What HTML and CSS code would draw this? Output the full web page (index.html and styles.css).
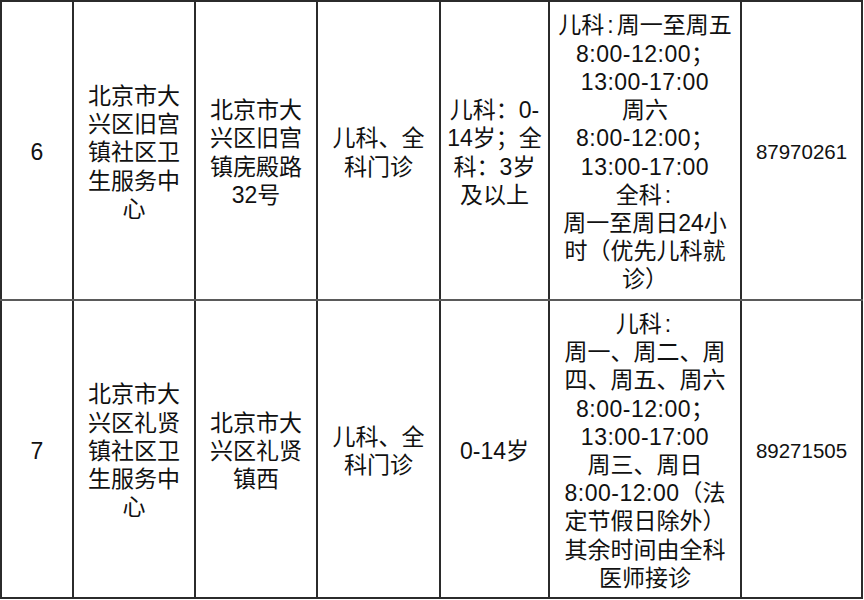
FILE: index.html
```html
<!DOCTYPE html>
<html lang="zh-CN">
<head>
<meta charset="utf-8">
<title>社区卫生服务中心</title>
<link rel="stylesheet" href="styles.css">
</head>
<body>
<table class="grid">
  <colgroup>
    <col class="c-no">
    <col class="c-name">
    <col class="c-addr">
    <col class="c-dept">
    <col class="c-age">
    <col class="c-time">
    <col class="c-tel">
  </colgroup>
  <tbody>
    <tr class="row row-1">
      <td>6</td>
      <td>北京市大<br>兴区旧宫<br>镇社区卫<br>生服务中<br>心</td>
      <td>北京市大<br>兴区旧宫<br>镇庑殿路<br>32号</td>
      <td>儿科、全<br>科门诊</td>
      <td>儿科：0-<br>14岁；全<br>科：3岁<br>及以上</td>
      <td>儿科<span class="colon">:</span>周一至周五<br><span class="tm">8:00-12:00</span>；<br><span class="tm">13:00-17:00</span><br>周六<br><span class="tm">8:00-12:00</span>；<br><span class="tm">13:00-17:00</span><br>全科<span class="colon">:</span><br>周一至周日24小<br>时（优先儿科就<br>诊）</td>
      <td class="tel">87970261</td>
    </tr>
    <tr class="row row-2">
      <td>7</td>
      <td>北京市大<br>兴区礼贤<br>镇社区卫<br>生服务中<br>心</td>
      <td>北京市大<br>兴区礼贤<br>镇西</td>
      <td>儿科、全<br>科门诊</td>
      <td>0-14岁</td>
      <td>儿科<span class="colon">:</span><br>周一、周二、周<br>四、周五、周六<br><span class="tm">8:00-12:00</span>；<br><span class="tm">13:00-17:00</span><br>周三、周日<br><span class="tm">8:00-12:00</span>（法<br>定节假日除外）<br>其余时间由全科<br>医师接诊</td>
      <td class="tel">89271505</td>
    </tr>
  </tbody>
</table>
</body>
</html>
```
FILE: styles.css
```css
html, body {
  margin: 0;
  padding: 0;
  background: #ffffff;
}

.grid {
  border-collapse: collapse;
  table-layout: fixed;
  width: 863px;
  font-family: "Liberation Sans", "Noto Sans CJK SC", sans-serif;
  font-size: 23px;
  line-height: 28.2px;
  color: #111111;
  border: 2px solid #2b2b2b;
}

.c-no { width: 72px; }
.c-name { width: 122px; }
.c-addr { width: 122px; }
.c-dept { width: 123px; }
.c-age { width: 109px; }
.c-time { width: 192px; }
.c-tel { width: 121px; }

.grid td {
  border-left: 2px solid #2b2b2b;
  border-right: 2px solid #2b2b2b;
  text-align: center;
  vertical-align: middle;
  white-space: nowrap;
  padding: 4px 4px 0;
  overflow: visible;
}

.grid td.tel {
  font-size: 20.5px;
}

.row-1 { height: 299px; }
.row-2 { height: 298px; }

.row-1 td {
  border-bottom: 2px solid #5a5a5a;
}

.colon {
  padding: 0 3px;
}

.tm {
  letter-spacing: 0.5px;
}
```
